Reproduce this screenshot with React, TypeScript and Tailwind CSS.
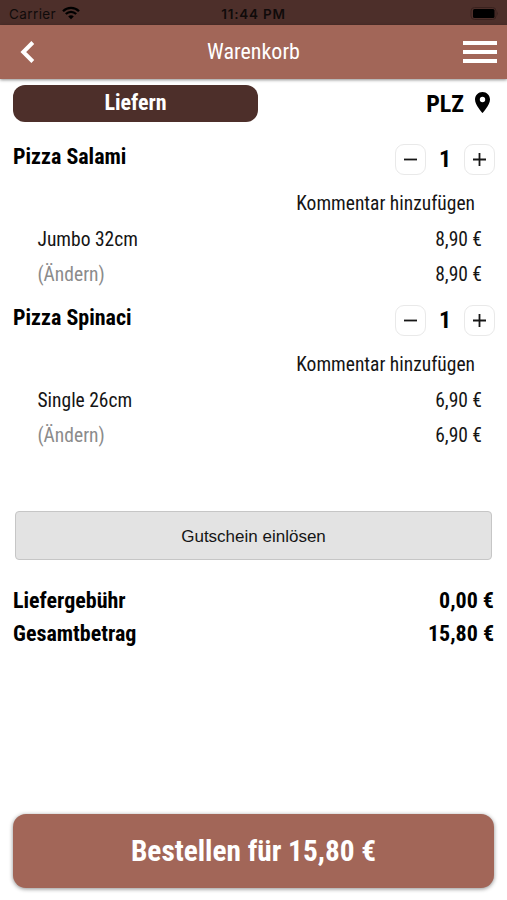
import React from "react";

type Item = { name: string; size: string; price: string };

const items: Item[] = [
  { name: "Pizza Salami", size: "Jumbo 32cm", price: "8,90 €" },
  { name: "Pizza Spinaci", size: "Single 26cm", price: "6,90 €" },
];

function StepButton({ plus }: { plus?: boolean }) {
  return (
    <button className="flex h-[31px] w-[31px] items-center justify-center rounded-[9px] border border-[#e9e9e9] bg-white" aria-label={plus ? "Mehr" : "Weniger"}>
      <svg width="15" height="15" viewBox="0 0 15 15" stroke="#161616" strokeWidth="1.8">
        <path d={plus ? "M1 7.5H14M7.5 1V14" : "M1 7.5H14"} />
      </svg>
    </button>
  );
}

function CartItem({ item }: { item: Item }) {
  return (
    <section className="h-[161px]">
      <div className="flex h-[50px] items-start justify-between pl-[13px] pr-3">
        <h2 className="mt-2 text-[22px] leading-[26px] font-bold text-black">{item.name}</h2>
        <div className="mt-[7px] flex items-center">
          <StepButton />
          <span className="w-[38px] pt-px text-center text-[24px] leading-[31px] font-bold text-black">1</span>
          <StepButton plus />
        </div>
      </div>
      <div className="flex h-[36px] items-center justify-end pr-8">Kommentar hinzufügen</div>
      <div className="flex h-[35px] items-center justify-between pl-[37.5px] pr-[25px]">
        <span>{item.size}</span>
        <span>{item.price}</span>
      </div>
      <div className="flex h-[35px] items-center justify-between pl-[37.5px] pr-[25px]">
        <span className="text-[#8b8b8b]">(Ändern)</span>
        <span>{item.price}</span>
      </div>
    </section>
  );
}

export default function App() {
  return (
    <main className="flex h-[900px] w-[507px] flex-col overflow-hidden bg-white font-['Roboto_Condensed','Roboto',sans-serif] text-[19.5px] leading-[26px] text-[#151515] [font-stretch:75%]">
      <div className="grid h-[25px] shrink-0 grid-cols-3 items-center bg-[#4d2f2a] pl-[9px] pr-[9px] pt-[2px] font-['Inter',sans-serif] text-[13.5px] leading-[20px] text-[#100b0a] [font-stretch:100%]">
        <span className="flex items-center gap-[6px] tracking-[0.4px]">
          Carrier
          <svg className="mb-0.5" width="18" height="14" viewBox="0 0 18 14" fill="none" stroke="#000" strokeWidth="2.3">
            <path d="M1 5.2C5.5.7 12.5.7 17 5.2M3.8 8C6.8 5.1 11.2 5.1 14.2 8" />
            <path d="M6.2 10.4C7.8 8.9 10.2 8.9 11.8 10.4L9 13.2Z" fill="#000" stroke="none" />
          </svg>
        </span>
        <span className="text-center font-semibold tracking-[0.75px]">11:44 PM</span>
        <span className="flex justify-end">
          <svg width="28" height="14" viewBox="0 0 28 14">
            <rect x="1" y=".5" width="25" height="12" rx="3.5" fill="none" stroke="#3a221e" />
            <rect x="3" y="2" width="21.5" height="9" rx="1.5" />
            <path d="M27 4.5Q28.5 6.5 27 8.5Z" fill="#3a221e" />
          </svg>
        </span>
      </div>
      <header className="grid h-[54px] shrink-0 grid-cols-[1fr_auto_1fr] items-center bg-[#a26658] pl-5 pr-[10px] shadow-[0_1px_3px_rgba(0,0,0,.45)]">
        <svg width="15" height="22" viewBox="0 0 15 22" fill="none" stroke="#fff" strokeWidth="4">
          <path d="M12.8 1.5L3.3 11L12.8 20.5" />
        </svg>
        <h1 className="mr-[10px] text-center text-[22px] text-white">Warenkorb</h1>
        <svg className="justify-self-end" width="34" height="24" viewBox="0 0 34 24" fill="#fff">
          <path d="M0 1H34V5H0ZM0 10H34V14H0ZM0 19H34V23H0Z" />
        </svg>
      </header>
      <div className="flex h-[57px] shrink-0 items-start justify-between pl-[13px] pr-[17px] pt-[6px]">
        <button className="h-[37px] w-[245px] rounded-[12px] bg-[#4d2f2a] pb-px text-[22px] leading-[34px] font-bold text-white">Liefern</button>
        <div className="flex h-[37px] items-center gap-[11px] text-[24px] font-bold text-black">
          <span>PLZ</span>
          <svg className="mb-0.5" width="15" height="21" viewBox="0 0 15 21">
            <path fillRule="evenodd" d="M7.5 0C3.3 0 0 3.3 0 7.4C0 12.8 7.5 21 7.5 21S15 12.8 15 7.4C15 3.3 11.7 0 7.5 0ZM7.5 4.8A2.7 2.7 0 1 1 7.5 10.2A2.7 2.7 0 1 1 7.5 4.8Z" />
          </svg>
        </div>
      </div>
      {items.map((item) => (
        <CartItem key={item.name} item={item} />
      ))}
      <button className="mx-[15px] mt-[53px] h-[49px] shrink-0 rounded-[4px] border border-[#c6c6c6] bg-[#e3e3e3] pt-0.5 font-['Liberation_Sans',Arial,sans-serif] text-[17px] [font-stretch:100%]">Gutschein einlösen</button>
      <div className="mt-[24px] shrink-0 px-[13px] text-[22px] font-bold text-black">
        <div className="flex h-[33px] items-center justify-between"><span>Liefergebühr</span><span>0,00 €</span></div>
        <div className="flex h-[33px] items-center justify-between"><span>Gesamtbetrag</span><span>15,80 €</span></div>
      </div>
      <button className="mx-[13px] mt-auto mb-[12px] h-[74px] shrink-0 rounded-[13px] bg-[#a26658] text-[29.3px] font-bold text-white shadow-[0_1px_4px_rgba(0,0,0,.45)]">Bestellen für 15,80 €</button>
    </main>
  );
}
